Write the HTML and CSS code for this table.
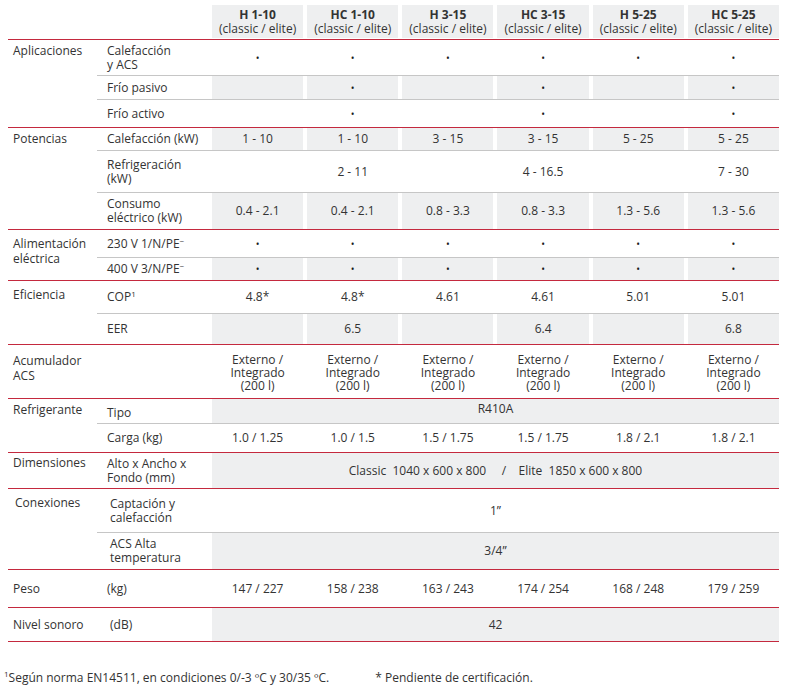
FILE: index.html
```html
<!DOCTYPE html>
<html lang="es">
<head>
<meta charset="utf-8">
<title>Tabla técnica</title>
<link rel="stylesheet" href="styles.css">
</head>
<body>
<div class="sheet">
  <div class="thead">
    <div class="hblank"></div>
    <div class="hcell"><b>H 1-10</b><span>(classic / elite)</span></div>
    <div class="hcell"><b>HC 1-10</b><span>(classic / elite)</span></div>
    <div class="hcell"><b>H 3-15</b><span>(classic / elite)</span></div>
    <div class="hcell"><b>HC 3-15</b><span>(classic / elite)</span></div>
    <div class="hcell"><b>H 5-25</b><span>(classic / elite)</span></div>
    <div class="hcell"><b>HC 5-25</b><span>(classic / elite)</span></div>
  </div>

  <div class="group">
    <div class="glabel">Aplicaciones</div>
    <div class="rows">
      <div class="row r35">
        <div class="sub"><span>Calefacción<br>y ACS</span></div>
        <div class="c"><span class="dot">•</span></div><div class="c"><span class="dot">•</span></div><div class="c"><span class="dot">•</span></div><div class="c"><span class="dot">•</span></div><div class="c"><span class="dot">•</span></div><div class="c"><span class="dot">•</span></div>
      </div>
      <div class="row r23">
        <div class="sub"><span>Frío pasivo</span></div>
        <div class="c g"></div><div class="c g"><span class="dot">•</span></div><div class="c g"></div><div class="c g"><span class="dot">•</span></div><div class="c g"></div><div class="c g"><span class="dot">•</span></div>
      </div>
      <div class="row r27">
        <div class="sub"><span>Frío activo</span></div>
        <div class="c"></div><div class="c"><span class="dot">•</span></div><div class="c"></div><div class="c"><span class="dot">•</span></div><div class="c"></div><div class="c"><span class="dot">•</span></div>
      </div>
    </div>
  </div>

  <div class="group">
    <div class="glabel">Potencias</div>
    <div class="rows">
      <div class="row r22">
        <div class="sub"><span>Calefacción (kW)</span></div>
        <div class="c g">1 - 10</div><div class="c g">1 - 10</div><div class="c g">3 - 15</div><div class="c g">3 - 15</div><div class="c g">5 - 25</div><div class="c g">5 - 25</div>
      </div>
      <div class="row r41">
        <div class="sub"><span>Refrigeración<br>(kW)</span></div>
        <div class="c"></div><div class="c">2 - 11</div><div class="c"></div><div class="c">4 - 16.5</div><div class="c"></div><div class="c">7 - 30</div>
      </div>
      <div class="row r36">
        <div class="sub"><span>Consumo<br>eléctrico (kW)</span></div>
        <div class="c g">0.4 - 2.1</div><div class="c g">0.4 - 2.1</div><div class="c g">0.8 - 3.3</div><div class="c g">0.8 - 3.3</div><div class="c g">1.3 - 5.6</div><div class="c g">1.3 - 5.6</div>
      </div>
    </div>
  </div>

  <div class="group">
    <div class="glabel pt6">Alimentación<br>eléctrica</div>
    <div class="rows">
      <div class="row r27">
        <div class="sub"><span>230 V 1/N/PE<sup>~</sup></span></div>
        <div class="c"><span class="dot">•</span></div><div class="c"><span class="dot">•</span></div><div class="c"><span class="dot">•</span></div><div class="c"><span class="dot">•</span></div><div class="c"><span class="dot">•</span></div><div class="c"><span class="dot">•</span></div>
      </div>
      <div class="row r22">
        <div class="sub"><span>400 V 3/N/PE<sup>~</sup></span></div>
        <div class="c g"><span class="dot">•</span></div><div class="c g"><span class="dot">•</span></div><div class="c g"><span class="dot">•</span></div><div class="c g"><span class="dot">•</span></div><div class="c g"><span class="dot">•</span></div><div class="c g"><span class="dot">•</span></div>
      </div>
    </div>
  </div>

  <div class="group">
    <div class="glabel pt6">Eficiencia</div>
    <div class="rows">
      <div class="row r32">
        <div class="sub"><span>COP<sup>1</sup></span></div>
        <div class="c">4.8*</div><div class="c">4.8*</div><div class="c">4.61</div><div class="c">4.61</div><div class="c">5.01</div><div class="c">5.01</div>
      </div>
      <div class="row r30">
        <div class="sub"><span>EER</span></div>
        <div class="c g"></div><div class="c g">6.5</div><div class="c g"></div><div class="c g">6.4</div><div class="c g"></div><div class="c g">6.8</div>
      </div>
    </div>
  </div>

  <div class="group">
    <div class="glabel pt7">Acumulador<br>ACS</div>
    <div class="rows">
      <div class="row r53 tight">
        <div class="sub"></div>
        <div class="c">Externo /<br>Integrado<br>(200 l)</div><div class="c">Externo /<br>Integrado<br>(200 l)</div><div class="c">Externo /<br>Integrado<br>(200 l)</div><div class="c">Externo /<br>Integrado<br>(200 l)</div><div class="c">Externo /<br>Integrado<br>(200 l)</div><div class="c">Externo /<br>Integrado<br>(200 l)</div>
      </div>
    </div>
  </div>

  <div class="group">
    <div class="glabel">Refrigerante</div>
    <div class="rows">
      <div class="row r24">
        <div class="sub low"><span>Tipo</span></div>
        <div class="c g span up">R410A</div>
      </div>
      <div class="row r28">
        <div class="sub"><span>Carga (kg)</span></div>
        <div class="c">1.0 / 1.25</div><div class="c">1.0 / 1.5</div><div class="c">1.5 / 1.75</div><div class="c">1.5 / 1.75</div><div class="c">1.8 / 2.1</div><div class="c">1.8 / 2.1</div>
      </div>
    </div>
  </div>

  <div class="group">
    <div class="glabel pt1">Dimensiones</div>
    <div class="rows">
      <div class="row r35">
        <div class="sub"><span>Alto x Ancho x<br>Fondo (mm)</span></div>
        <div class="c g span pre">Classic  1040 x 600 x 800     /    Elite  1850 x 600 x 800</div>
      </div>
    </div>
  </div>

  <div class="group">
    <div class="glabel pt6 ind">Conexiones</div>
    <div class="rows">
      <div class="row r43">
        <div class="sub ind"><span>Captación y<br>calefacción</span></div>
        <div class="c span">1”</div>
      </div>
      <div class="row r36">
        <div class="sub ind"><span>ACS Alta<br>temperatura</span></div>
        <div class="c g span">3/4”</div>
      </div>
    </div>
  </div>

  <div class="group">
    <div class="glabel mid">Peso</div>
    <div class="rows">
      <div class="row r37">
        <div class="sub"><span>(kg)</span></div>
        <div class="c">147 / 227</div><div class="c">158 / 238</div><div class="c">163 / 243</div><div class="c">174 / 254</div><div class="c">168 / 248</div><div class="c">179 / 259</div>
      </div>
    </div>
  </div>

  <div class="group">
    <div class="glabel mid">Nivel sonoro</div>
    <div class="rows">
      <div class="row r33">
        <div class="sub ind"><span>(dB)</span></div>
        <div class="c g span">42</div>
      </div>
    </div>
  </div>

  <div class="notes">
    <span><sup>1</sup>Según norma EN14511, en condiciones 0/-3 ºC y 30/35 ºC.</span>
    <span>* Pendiente de certificación.</span>
  </div>
</div>
</body>
</html>
```

FILE: styles.css
```css
* { box-sizing: content-box; }
html, body { margin: 0; padding: 0; background: #ffffff; }
body {
  font-family: "Open Sans", "Noto Sans", sans-serif;
  font-size: 12px;
  color: #333333;
  line-height: 14px;
}
.sheet {
  width: 771px;
  padding: 5px 0 0 8px;
}
.thead {
  display: grid;
  grid-template-columns: 200px repeat(6, 1fr);
  column-gap: 4px;
  padding-bottom: 1px;
  border-bottom: 1px solid #c4293e;
}
.hcell {
  height: 33px;
  background: #eeeff0;
  display: flex;
  flex-direction: column;
  justify-content: center;
  align-items: center;
  line-height: 14px;
}
.hcell b { font-weight: 700; }
.group {
  display: grid;
  grid-template-columns: 89px 1fr;
  border-bottom: 1px solid #c4293e;
}
.glabel {
  padding: 3px 0 0 5px;
  line-height: 15px;
}
.glabel.pt6 { padding-top: 6px; }
.glabel.pt7 { padding-top: 8px; }
.glabel.pt1 { padding-top: 2px; }
.glabel.ind { padding-left: 7px; }
.glabel.mid { padding-top: 0; display: flex; align-items: center; }
.rows { display: flex; flex-direction: column; }
.row {
  display: grid;
  grid-template-columns: 111px repeat(6, 1fr);
  column-gap: 4px;
}
.row + .row { border-top: 1px solid #c6c6c6; }
.sub {
  display: flex;
  align-items: center;
  padding-left: 10px;
}
.sub.ind { padding-left: 13px; }
.sub.low { padding-top: 3px; }
.c {
  display: flex;
  align-items: center;
  justify-content: center;
  text-align: center;
}
.c.g { background: #eeeff0; }
.c.span { grid-column: 2 / -1; }
.c.up { padding-bottom: 4px; }
.c.pre { white-space: pre; }
.tight .c { line-height: 13px; padding-top: 2px; }
.dot { font-size: 10px; line-height: 10px; color: #1a1a1a; }
sup { font-size: 8px; line-height: 0; vertical-align: 4px; }
.r22 { height: 22px; }
.r23 { height: 23px; }
.r24 { height: 24px; }
.r27 { height: 27px; }
.r28 { height: 28px; }
.r30 { height: 30px; }
.r32 { height: 32px; }
.r33 { height: 33px; }
.r35 { height: 35px; }
.r36 { height: 36px; }
.r37 { height: 37px; }
.r41 { height: 41px; }
.r43 { height: 43px; }
.r53 { height: 53px; }
.notes {
  display: flex;
  gap: 46px;
  padding: 28px 0 0 0;
  margin-left: -4px;
  line-height: 16px;
}
.notes sup { font-size: 8px; vertical-align: 5px; }
```
